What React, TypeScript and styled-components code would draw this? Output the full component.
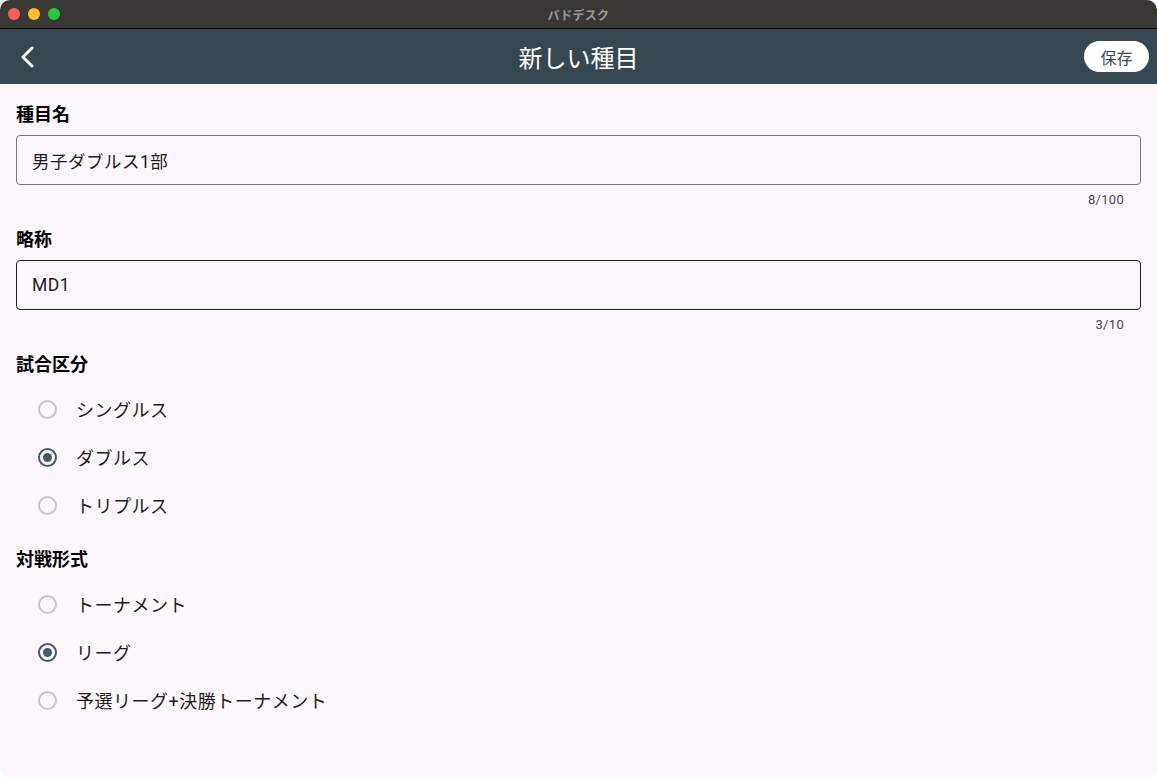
import React, { FC, useState } from 'react';
import styled, { createGlobalStyle } from 'styled-components';

const GlobalStyle = createGlobalStyle`
  html, body {
    margin: 0;
    padding: 0;
    background: #ffffff;
  }
  body {
    font-family: Roboto, 'Noto Sans CJK JP', sans-serif;
  }
`;

const Window = styled.div`
  width: 1157px;
  height: 779px;
  border-radius: 10px;
  overflow: hidden;
  display: flex;
  flex-direction: column;
  background: #fdf7fd;
`;

const TitleBar = styled.div`
  height: 28px;
  flex-shrink: 0;
  display: grid;
  grid-template-columns: 1fr auto 1fr;
  align-items: center;
  background: #393835;
  border-bottom: 1px solid #050505;
`;

const Lights = styled.div`
  display: flex;
  gap: 8px;
  padding-left: 8px;
`;

const Light = styled.span<{ $color: string }>`
  width: 12px;
  height: 12px;
  border-radius: 50%;
  background: ${(p) => p.$color};
`;

const WindowTitle = styled.div`
  font-family: 'Noto Sans CJK JP', sans-serif;
  font-size: 12px;
  font-weight: 700;
  color: #9b9a98;
  letter-spacing: 0.3px;
`;

const AppBar = styled.header`
  height: 55px;
  flex-shrink: 0;
  display: grid;
  grid-template-columns: 1fr auto 1fr;
  align-items: center;
  background: #37474f;
  color: #ffffff;
`;

const BackButton = styled.button`
  justify-self: start;
  display: flex;
  align-items: center;
  margin-left: 19px;
  padding: 0;
  border: none;
  background: none;
  cursor: pointer;
`;

const Title = styled.h1`
  margin: 0;
  font-family: 'Noto Sans CJK JP', sans-serif;
  font-size: 24px;
  font-weight: 400;
  color: #ffffff;
`;

const SaveButton = styled.button`
  justify-self: end;
  margin-right: 8px;
  width: 65px;
  height: 31px;
  border: none;
  border-radius: 16px;
  background: #ffffff;
  color: #3a4a52;
  font-family: 'Noto Sans CJK JP', sans-serif;
  font-size: 16px;
  cursor: pointer;
`;

const Content = styled.main`
  flex: 1;
  padding: 17px 16px 0;
  color: #1d1b20;
`;

const SectionLabel = styled.div`
  font-family: 'Noto Sans CJK JP', sans-serif;
  font-size: 18px;
  font-weight: 700;
  line-height: 24px;
  color: #000000;
  margin-bottom: 10px;
`;

const Field = styled.div`
  margin-bottom: 18px;
`;

const Input = styled.input<{ $focused?: boolean }>`
  box-sizing: border-box;
  width: 100%;
  height: 50px;
  padding: 0 15px;
  border: 1px solid ${(p) => (p.$focused ? '#1d1b20' : '#7a757f')};
  border-radius: 4px;
  background: transparent;
  font-family: Roboto, 'Noto Sans CJK JP', sans-serif;
  font-size: 17.5px;
  letter-spacing: 0.5px;
  color: #1d1b20;
  outline: none;
`;

const Counter = styled.div`
  margin-top: 7px;
  padding-right: 17px;
  text-align: right;
  font-size: 13px;
  line-height: 16px;
  letter-spacing: 0.3px;
  color: #49454f;
`;

const RadioGroup = styled.div`
  display: flex;
  flex-direction: column;
  margin-top: 10px;
  margin-bottom: 17px;
`;

const RadioRow = styled.label`
  height: 48px;
  display: flex;
  align-items: center;
  gap: 19px;
  padding-left: 22px;
  cursor: pointer;
  font-family: Roboto, 'Noto Sans CJK JP', sans-serif;
  font-size: 18px;
  letter-spacing: 0.5px;
  color: #1d1b20;
`;

const RadioCircle = styled.span<{ $checked: boolean }>`
  box-sizing: border-box;
  width: 19px;
  height: 19px;
  border-radius: 50%;
  border: 2px solid ${(p) => (p.$checked ? '#455a64' : '#c6c4c7')};
  display: flex;
  align-items: center;
  justify-content: center;
  &::after {
    content: '';
    width: 9px;
    height: 9px;
    border-radius: 50%;
    background: ${(p) => (p.$checked ? '#455a64' : 'transparent')};
  }
`;

type RadioListProps = {
  options: string[];
  value: string;
  onChange: (v: string) => void;
};

const RadioList: FC<RadioListProps> = ({ options, value, onChange }) => (
  <RadioGroup>
    {options.map((opt) => (
      <RadioRow key={opt} onClick={() => onChange(opt)}>
        <RadioCircle $checked={opt === value} />
        {opt}
      </RadioRow>
    ))}
  </RadioGroup>
);

const App: FC = () => {
  const [name, setName] = useState('男子ダブルス1部');
  const [abbr, setAbbr] = useState('MD1');
  const [matchType, setMatchType] = useState('ダブルス');
  const [format, setFormat] = useState('リーグ');

  return (
    <>
      <GlobalStyle />
      <Window>
        <TitleBar>
          <Lights>
            <Light $color='#fe5f57' />
            <Light $color='#febc2e' />
            <Light $color='#28c840' />
          </Lights>
          <WindowTitle>バドデスク</WindowTitle>
          <div />
        </TitleBar>
        <AppBar>
          <BackButton aria-label='戻る'>
            <svg width='16' height='22' viewBox='0 0 16 22'>
              <polyline
                points='13,2 4,11 13,20'
                fill='none'
                stroke='#ffffff'
                strokeWidth='3'
                strokeLinecap='round'
                strokeLinejoin='round'
              />
            </svg>
          </BackButton>
          <Title>新しい種目</Title>
          <SaveButton>保存</SaveButton>
        </AppBar>
        <Content>
          <SectionLabel>種目名</SectionLabel>
          <Field>
            <Input value={name} onChange={(e) => setName(e.target.value)} />
            <Counter>{name.length}/100</Counter>
          </Field>

          <SectionLabel>略称</SectionLabel>
          <Field>
            <Input $focused value={abbr} onChange={(e) => setAbbr(e.target.value)} />
            <Counter>{abbr.length}/10</Counter>
          </Field>

          <SectionLabel>試合区分</SectionLabel>
          <RadioList
            options={['シングルス', 'ダブルス', 'トリプルス']}
            value={matchType}
            onChange={setMatchType}
          />

          <SectionLabel>対戦形式</SectionLabel>
          <RadioList
            options={['トーナメント', 'リーグ', '予選リーグ+決勝トーナメント']}
            value={format}
            onChange={setFormat}
          />
        </Content>
      </Window>
    </>
  );
};

export default App;
